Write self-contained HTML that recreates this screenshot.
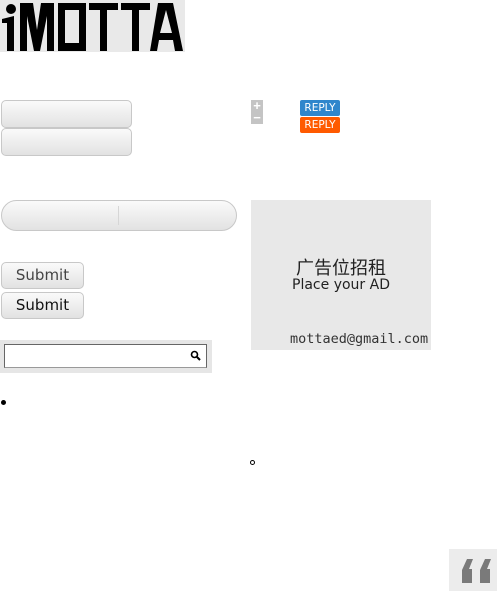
<!DOCTYPE html>
<html><head><meta charset="utf-8"><style>
body{margin:0;width:500px;height:600px;background:#fff;position:relative;overflow:hidden;font-family:"Liberation Sans","DejaVu Sans",sans-serif}
.a{position:absolute}
.logo{left:0;top:0;width:185px;height:52px;background:#e9e9e9}
.gb{border:1px solid #c8c8c8;border-radius:5px;background:linear-gradient(#fafafa,#e2e2e2);box-sizing:border-box}
.rep{width:40px;height:16px;border-radius:2px;color:#fff;font-size:10.5px;text-align:center;line-height:16px;font-family:"DejaVu Sans",sans-serif}
.sub{left:1px;width:83px;height:27px;font-size:15px;text-align:center;line-height:25px;font-family:"DejaVu Sans",sans-serif;border-radius:5px}
</style></head><body>
<div class="a logo"><svg width="185" height="52" viewBox="0 0 185 52">
<g fill="#000">
<circle cx="11" cy="9" r="5"/>
<path d="M2 19 L14 16 L14 51 L7 51 L7 23 L2 23Z"/>
<path d="M20 3 L33 3 L37 30 L41 3 L54 3 L54 51 L47 51 L47 16 L40 51 L34 51 L27 16 L27 51 L20 51Z"/>
<path d="M58 3 L86 3 L86 51 L58 51Z M65 10 L65 43 L79 43 L79 10Z" fill-rule="evenodd"/>
<path d="M89 3 L118 3 L118 10 L107 10 L107 51 L100 51 L100 10 L89 10Z"/>
<path d="M121 3 L150 3 L150 10 L139 10 L139 51 L132 51 L132 10 L121 10Z"/>
<path d="M158 3 L173 3 L183 51 L175 51 L173 40 L159 40 L157 51 L150 51Z M160 33 L172 33 L166 10Z" fill-rule="evenodd"/>
</g></svg></div>
<div class="a gb" style="left:1px;top:100px;width:131px;height:28px"></div>
<div class="a gb" style="left:1px;top:128px;width:131px;height:28px"></div>
<div class="a" style="left:251px;top:100px;width:12px;height:24px;background:#c4c4c4;color:#fff;font-size:13px;font-weight:bold;line-height:12px;text-align:center">+<br>−</div>
<div class="a rep" style="left:300px;top:100px;background:#2f86cc">REPLY</div>
<div class="a rep" style="left:300px;top:117px;background:#ff5a00">REPLY</div>
<div class="a gb" style="left:1px;top:200px;width:236px;height:31px;border-radius:16px"></div>
<div class="a" style="left:118px;top:206px;width:1px;height:19px;background:#d6d6d6"></div>
<div class="a gb sub" style="top:262px;color:#444">Submit</div>
<div class="a gb sub" style="top:292px;color:#111">Submit</div>
<div class="a" style="left:0;top:340px;width:212px;height:33px;background:#e6e6e6"></div>
<div class="a" style="left:4px;top:344px;width:203px;height:24px;background:#fff;border:1px solid #666;border-bottom-color:#999;box-sizing:border-box"></div>
<svg class="a" style="left:190px;top:350px" width="12" height="12"><circle cx="4.5" cy="4.5" r="3" fill="none" stroke="#000" stroke-width="1.6"/><path d="M7 7 L10 10" stroke="#000" stroke-width="2"/></svg>
<div class="a" style="left:251px;top:200px;width:180px;height:150px;background:#e8e8e8"></div>
<div class="a" style="left:251px;top:255px;width:180px;text-align:center;font-size:18px;color:#222;font-family:'Noto Sans CJK SC',sans-serif;line-height:24px">广告位招租</div>
<div class="a" style="left:251px;top:277px;width:180px;text-align:center;font-size:14px;color:#222;font-family:'DejaVu Sans',sans-serif">Place your AD</div>
<div class="a" style="left:290px;top:331px;font-size:13.5px;color:#333;font-family:'DejaVu Sans Mono','Liberation Mono',monospace">mottaed@gmail.com</div>
<div class="a" style="left:1px;top:400px;width:5px;height:5px;border-radius:50%;background:#000"></div>
<div class="a" style="left:250px;top:460px;width:3px;height:3px;border-radius:50%;border:1.5px solid #000"></div>
<div class="a" style="left:449px;top:549px;width:48px;height:42px;background:#ececec"></div>
<svg class="a" style="left:449px;top:549px" width="48" height="42"><g fill="#7a7a7a">
<path d="M18 10 L24 10 L20 20 L20 20 L23 20 L23 34 L13 34 L13 21 Z"/>
<path d="M36 10 L42 10 L38 20 L41 20 L41 34 L31 34 L31 21 Z"/>
</g></svg>
</body></html>
